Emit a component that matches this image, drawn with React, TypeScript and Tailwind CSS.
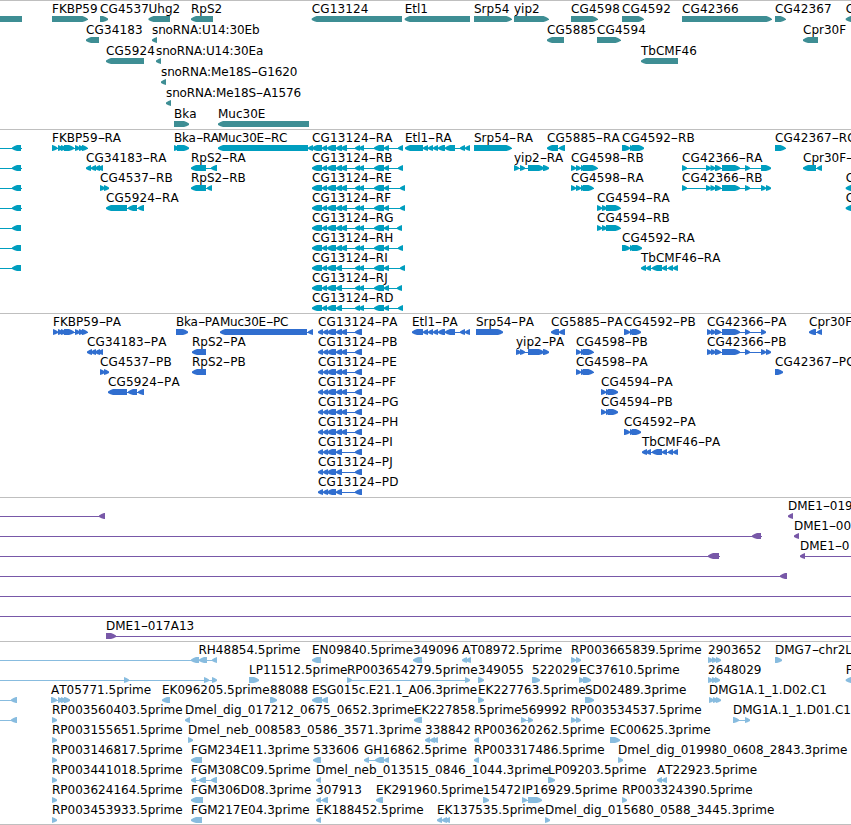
type Exon = [number, number];

type Feature = {
  dir: 1 | -1;
  exons: Exon[];
  label?: string;
  labelX?: number;
  // thin connector; defaults to the span of the exons
  line?: Exon;
};

type Track = {
  name: string;
  color: string;
  rowClass: string;
  rows: Feature[][];
};

const WIDTH = 851;
const TIP = 5;

const fwd = (label: string, ...exons: Exon[]): Feature => ({ dir: 1, exons, label });
const rev = (label: string, ...exons: Exon[]): Feature => ({ dir: -1, exons, label });
const span = (dir: 1 | -1, line: Exon, ...exons: Exon[]): Feature => ({ dir, exons, line });

const geneRows: Feature[][] = [
  [
    span(-1, [0, 22], [-10, 22]),
    fwd('FKBP59', [52, 87.5]),
    fwd('CG4537', [100, 108]),
    rev('Uhg2', [148.5, 170]),
    rev('RpS2', [191, 213]),
    rev('CG13124', [311.7, 402]),
    rev('Etl1', [404.7, 470]),
    fwd('Srp54', [474, 511.5]),
    fwd('yip2', [514, 548.5]),
    fwd('CG4598', [571, 597.5]),
    fwd('CG4592', [622, 643.5]),
    fwd('CG42366', [682, 771.5]),
    fwd('CG42367', [775, 785.5]),
    rev('C', [845.7, 860]),
  ],
  [
    rev('CG34183', [86, 99]),
    rev('snoRNA:U14:30Eb', [152, 157]),
    rev('CG5885', [547, 564]),
    fwd('CG4594', [597, 620.5]),
    rev('Cpr30F', [803, 818]),
  ],
  [
    rev('CG5924', [106, 144]),
    rev('snoRNA:U14:30Ea', [156, 161]),
    rev('TbCMF46', [641, 678]),
  ],
  [rev('snoRNA:Me18S-G1620', [161, 166])],
  [rev('snoRNA:Me18S-A1576', [166, 171])],
  [fwd('Bka', [174, 189]), rev('Muc30E', [218, 309])],
];

const leftEdge = (end: number) => span(-1, [0, end], [12, 21]);

// CG13124 isoforms differ only in the fifth exon and in the first one
const cg13124R = (suffix: string, end: number, fifth = true) =>
  rev(
    `CG13124-${suffix}`,
    [312, 322],
    [322, 327],
    [327, 336],
    [336, 342],
    ...(fifth ? ([[341, 347]] as Exon[]) : []),
    [355, 360],
    [359, 364],
    [374, 384],
    [384, 389],
    [end - 5, end],
  );

const cg13124P = (suffix: string, fifth = true) =>
  rev(
    `CG13124-${suffix}`,
    [318, 323],
    [323, 328],
    [327, 336],
    [336, 342],
    ...(fifth ? ([[341, 347]] as Exon[]) : []),
    [355, 362],
  );

const transcriptRows: Feature[][] = [
  [
    leftEdge(22),
    fwd('FKBP59-RA', [52, 57.5], [58, 62], [61, 65], [64, 74], [75, 80], [79, 83], [82, 87.5]),
    fwd('Bka-RA', [174, 178], [177, 189]),
    rev('Muc30E-RC', [218, 308], [308, 313]),
    cg13124R('RA', 403),
    rev('Etl1-RA', [405, 423], [423, 428], [428, 433], [433, 438], [438, 445], [445, 455], [460, 465], [465, 470]),
    fwd('Srp54-RA', [474, 511.5]),
    rev('CG5885-RA', [547, 558], [559, 565]),
    fwd('CG4592-RB', [622, 630], [630, 634], [632, 644]),
    fwd('CG42367-RC', [775, 785.5]),
  ],
  [
    leftEdge(22),
    rev('CG34183-RA', [86, 91], [91, 96], [95, 99], [98, 102]),
    rev('RpS2-RA', [191, 206], [211, 217]),
    cg13124R('RB', 403),
    fwd('yip2-RA', [514, 519], [520, 525], [528, 544], [543, 549]),
    fwd('CG4598-RB', [571, 576], [576, 581], [581, 586], [583, 597.5]),
    fwd('CG42366-RA', [682, 687], [706, 711], [710.5, 715], [715, 721], [722, 740], [745, 750], [761, 771]),
    rev('Cpr30F-RA', [803, 816], [817, 822]),
  ],
  [
    leftEdge(22),
    fwd('CG4537-RB', [100, 105], [104, 109]),
    rev('RpS2-RB', [191, 206], [207, 212]),
    cg13124R('RE', 405),
    fwd('CG4598-RA', [571, 576], [576, 581], [581, 586], [583, 593.5]),
    fwd('CG42366-RB', [682, 687], [706, 711], [710.5, 715], [715, 721], [722, 740], [745, 750], [761, 766], [766, 771]),
    rev('C', [845.7, 860]),
  ],
  [
    leftEdge(22),
    rev('CG5924-RA', [106, 127], [128, 137], [138, 144]),
    cg13124R('RF', 405),
    fwd('CG4594-RA', [597, 602], [602, 606], [606, 620.5]),
    rev('C', [845.7, 860]),
  ],
  [leftEdge(21), cg13124R('RG', 402), fwd('CG4594-RB', [597, 602], [602, 606], [606, 620.5])],
  [leftEdge(21), cg13124R('RH', 403), fwd('CG4592-RA', [622, 630], [630, 634], [632, 642])],
  [
    leftEdge(21),
    cg13124R('RI', 405, false),
    rev('TbCMF46-RA', [641, 646], [646, 651], [652, 662], [662, 667], [668, 673], [673, 678]),
  ],
  [cg13124R('RJ', 402, false)],
  [cg13124R('RD', 403, false)],
];

const proteinRows: Feature[][] = [
  [
    fwd('FKBP59-PA', [53, 58], [58, 62], [61, 65], [64, 74], [75, 80], [79, 83], [82, 87.5]),
    fwd('Bka-PA', [176, 188]),
    rev('Muc30E-PC', [220, 307], [308, 313]),
    cg13124P('PA'),
    rev('Etl1-PA', [412, 423], [423, 428], [428, 433], [433, 438], [438, 445], [445, 455], [460, 465], [465, 470]),
    fwd('Srp54-PA', [476, 503]),
    rev('CG5885-PA', [551, 559], [559, 565]),
    fwd('CG4592-PB', [624, 630], [630, 634], [632, 641]),
    fwd('CG42366-PA', [707, 712], [711, 716], [715, 721], [722, 740], [745, 750], [761, 766]),
    rev('Cpr30F-PA', [809, 816], [817, 822]),
  ],
  [
    rev('CG34183-PA', [87, 92], [91, 96], [95, 99], [98, 102]),
    rev('RpS2-PA', [192, 206]),
    cg13124P('PB'),
    fwd('yip2-PA', [516, 521], [520, 525], [528, 544], [543, 549]),
    fwd('CG4598-PB', [576, 581], [581, 585], [583, 593.5]),
    fwd('CG42366-PB', [707, 712], [711, 716], [715, 721], [722, 740], [745, 750], [761, 766], [766, 771]),
  ],
  [
    fwd('CG4537-PB', [100, 105], [104, 109]),
    rev('RpS2-PB', [192, 206]),
    cg13124P('PE'),
    fwd('CG4598-PA', [576, 581], [581, 585], [583, 593.5]),
    fwd('CG42367-PC', [775, 783]),
  ],
  [
    rev('CG5924-PA', [108, 127], [128, 137], [138, 144]),
    cg13124P('PF'),
    fwd('CG4594-PA', [601, 606], [606, 610], [608, 618]),
  ],
  [cg13124P('PG'), fwd('CG4594-PB', [601, 606], [606, 610], [608, 618])],
  [cg13124P('PH'), fwd('CG4592-PA', [624, 630], [630, 634], [632, 641])],
  [
    cg13124P('PI', false),
    rev('TbCMF46-PA', [642, 647], [646, 651], [652, 662], [662, 667], [668, 673], [673, 678]),
  ],
  [cg13124P('PJ', false)],
  [cg13124P('PD', false)],
];

const bacRows: Feature[][] = [
  [span(-1, [0, 105], [99, 105]), rev('DME1-019', [788, 793])],
  [span(-1, [0, 762], [752, 761]), rev('DME1-00', [794, 799])],
  [
    span(-1, [0, 720], [708, 719]),
    { dir: -1, exons: [[800, 805]], label: 'DME1-0', line: [800, WIDTH] },
  ],
  [span(-1, [0, 787], [780, 787])],
  [span(1, [0, WIDTH])],
  [span(1, [0, WIDTH])],
  [{ dir: 1, exons: [[106, 116]], label: 'DME1-017A13', line: [106, WIDTH] }],
];

const estRows: Feature[][] = [
  [
    { dir: -1, exons: [[191, 199], [199, 207], [212, 217]], label: 'RH48854.5prime', labelX: 198.5, line: [0, 217] },
    rev('EN09840.5prime', [312, 321]),
    rev('349096', [413, 422]),
    rev('AT08972.5prime', [462, 467], [466, 470]),
    fwd('RP003665839.5prime', [571, 576], [576, 581]),
    fwd('2903652', [708, 713], [712, 717], [716, 721]),
    fwd('DMG7-chr2L', [775, 782]),
  ],
  [
    span(1, [0, 217], [124, 129], [204, 209], [212, 217]),
    fwd('LP11512.5prime', [249, 259]),
    fwd('RP003654279.5prime', [347, 352], [465, 470]),
    fwd('349055', [478, 484]),
    fwd('522029', [532, 540]),
    fwd('EC37610.5prime', [579, 584], [583, 591]),
    fwd('2648029', [708, 713], [712, 716], [715, 720]),
    rev('F', [845.7, 860]),
  ],
  [
    span(-1, [0, 17], [11, 17]),
    fwd('AT05771.5prime', [51, 57], [58, 63], [61, 66], [64, 70]),
    rev('EK096205.5prime', [162, 170]),
    fwd('88088', [270, 277]),
    rev('ESG015c.E21.1_A06.3prime', [312, 322], [322, 328]),
    fwd('EK227763.5prime', [478, 484]),
    fwd('SD02489.3prime', [585, 594]),
    fwd('DMG1A.1_1.D02.C1', [709, 714], [713, 717], [716, 721]),
  ],
  [
    span(-1, [0, 17], [11, 17]),
    fwd('RP003560403.5prime', [52, 57]),
    rev('Dmel_dig_017212_0675_0652.3prime', [185, 190]),
    rev('EK227858.5prime', [414, 422]),
    fwd('569992', [521, 526], [528, 533]),
    fwd('RP003534537.5prime', [571, 576], [576, 581]),
    fwd('DMG1A.1_1.D01.C1', [733, 739], [745, 750]),
  ],
  [
    fwd('RP003155651.5prime', [52, 57]),
    fwd('Dmel_neb_008583_0586_3571.3prime', [188, 193]),
    rev('338842', [425, 430], [430, 434], [433, 438]),
    rev('RP003620262.5prime', [474, 479]),
    fwd('EC00625.3prime', [610, 620]),
  ],
  [
    fwd('RP003146817.5prime', [52, 57]),
    rev('FGM234E11.3prime', [191, 202]),
    rev('533606', [313, 321]),
    rev('GH16862.5prime', [364, 369], [375, 384], [384, 389]),
    rev('RP003317486.5prime', [474, 479]),
    fwd('Dmel_dig_019980_0608_2843.3prime', [618, 623]),
  ],
  [
    fwd('RP003441018.5prime', [52, 57]),
    rev('FGM308C09.5prime', [191, 196], [199, 206], [211, 217]),
    rev('Dmel_neb_013515_0846_1044.3prime', [316, 321]),
    fwd('LP09203.5prime', [548, 555]),
    rev('AT22923.5prime', [657, 662], [662, 667]),
  ],
  [
    fwd('RP003624164.5prime', [52, 57]),
    rev('FGM306D08.3prime', [191, 203]),
    rev('307913', [316, 321], [322, 328]),
    rev('EK291960.5prime', [376, 383]),
    fwd('15472', [483, 489]),
    fwd('IP16929.5prime', [522, 527], [528, 542]),
    fwd('RP003324390.5prime', [622, 627]),
  ],
  [
    fwd('RP003453933.5prime', [52, 57]),
    rev('FGM217E04.3prime', [191, 202]),
    rev('EK188452.5prime', [316, 321]),
    rev('EK137535.5prime', [437, 442], [442, 446], [445, 450]),
    fwd('Dmel_dig_015680_0588_3445.3prime', [545, 550]),
  ],
];

const tracks: Track[] = [
  { name: 'genes', color: '#3e8e94', rowClass: 'h-[21px]', rows: geneRows },
  { name: 'transcripts', color: '#009ebf', rowClass: 'h-5 first:mt-px', rows: transcriptRows },
  { name: 'proteins', color: '#306ecf', rowClass: 'h-5 first:mt-px', rows: proteinRows },
  { name: 'bacs', color: '#7858a8', rowClass: 'h-5 first:mt-px', rows: bacRows },
  { name: 'ests', color: '#88bcdf', rowClass: 'h-5 first:mt-px', rows: estRows },
];

// the head is slightly convex so that short exons still read as solid
const exonPoints = ([start, end]: Exon, dir: 1 | -1) => (
  dir === 1
    ? `${start},0 ${end - TIP},0 ${end - 2.5},1 ${end},2.5 ${end},4 ${end - 2.5},5.2 ${end - TIP},6 ${start},6`
    : `${end},0 ${start + TIP},0 ${start + 2.5},1 ${start},2.5 ${start},4 ${start + 2.5},5.2 ${start + TIP},6 ${end},6`
);

const FeatureGlyph = ({ feature }: { feature: Feature }) => {
  const { dir, exons, line } = feature;
  const [from, to] = line ?? [exons[0][0], exons[exons.length - 1][1]];

  return (
    <g>
      <rect height="1" shapeRendering="crispEdges" width={to - from} x={from} y="3" />
      {exons.map((exon) => (
        <polygon
          key={exon[0]}
          points={exonPoints([exon[0], Math.max(exon[1], exon[0] + TIP)], dir)}
        />
      ))}
    </g>
  );
};

const labelTracking = (text: string) => {
  if (text.startsWith('Bka-')) return 'tracking-[-0.3px]';
  if (text.startsWith('Muc30E-')) return 'tracking-[-0.25px]';
  if (text.startsWith('snoRNA') || text.startsWith('ESG')) return 'tracking-[-0.12px]';
  if (text.startsWith('CG')) return 'tracking-[0.14px]';
  if (text.startsWith('Dmel')) return 'tracking-[0.06px]';
  return 'tracking-normal';
};

const FeatureLabel = ({ text, x }: { text: string; x: number }) => (
  <span
    className={`absolute bottom-[5px] whitespace-pre text-xs leading-[15px] text-black [font-kerning:none] ${labelTracking(text)}`}
    style={{ left: x }}
  >
    {text.split('-').map((part, index) => (
      <span key={index}>
        {index > 0 && <span className="inline-block w-[7px] scale-x-[1.75] text-center">-</span>}
        {part}
      </span>
    ))}
  </span>
);

const TrackRow = ({ className, features }: { className: string; features: Feature[] }) => (
  <div className={`relative flex flex-col justify-end ${className}`}>
    {features.map((feature) => (
      feature.label && (
        <FeatureLabel
          key={`${feature.label}-${feature.exons[0][0]}`}
          text={feature.label}
          x={feature.labelX ?? feature.exons[0][0]}
        />
      )
    ))}
    <svg className="block h-1.5 w-full" fill="currentColor" viewBox={`0 0 ${WIDTH} 6`}>
      {features.map((feature, index) => (
        <FeatureGlyph feature={feature} key={index} />
      ))}
    </svg>
  </div>
);

export default function App() {
  return (
    <main className="w-[851px] overflow-hidden border-b border-[#bfbfbf] bg-white font-['DejaVu_Sans',sans-serif]">
      {tracks.map((track) => (
        <section
          className="border-t border-[#bfbfbf] pb-0.5 last:pb-px"
          key={track.name}
          style={{ color: track.color }}
        >
          {track.rows.map((features, index) => (
            <TrackRow className={track.rowClass} features={features} key={index} />
          ))}
        </section>
      ))}
    </main>
  );
}
